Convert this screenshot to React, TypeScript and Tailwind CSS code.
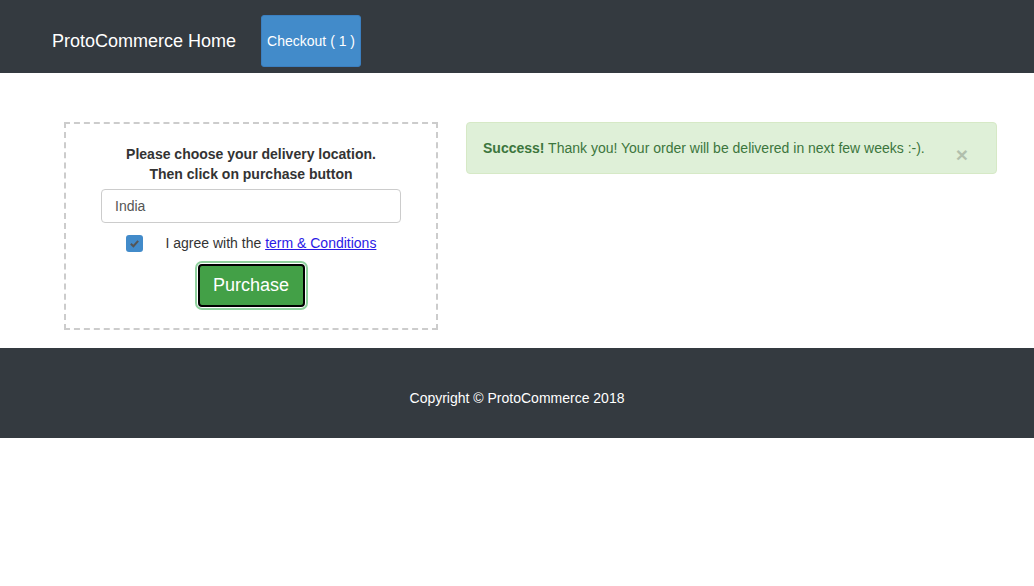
import React from 'react';

const Header = () => (
  <nav className="h-[73px] bg-[#343a40] flex items-start pl-[52px]">
    <span className="mt-[30px] text-[18px] leading-[22px] text-white">ProtoCommerce Home</span>
    <button className="ml-[25px] mt-[15px] h-[52px] w-[100px] rounded-[3px] border border-[#3b7fc0] bg-[#428bca] text-[14px] text-white">
      Checkout ( 1 )
    </button>
  </nav>
);

const DeliveryBox = () => (
  <div className="w-[374px] h-[208px] border-2 border-dashed border-[#cccccc] pt-[20px] flex flex-col items-center">
    <p className="text-[14px] leading-[20px] font-bold text-[#333] text-center">
      Please choose your delivery location.
      <br />
      Then click on purchase button
    </p>
    <input
      readOnly
      value="India"
      className="mt-[5px] w-[300px] h-[34px] rounded-[4px] border border-[#cccccc] px-[13px] text-[14px] text-[#555] outline-none"
    />
    <div className="mt-[10px] h-[20px] flex items-center w-[251px] text-[14px] text-[#333]">
      <span className="w-[17px] h-[17px] rounded-[3px] bg-[#428bca] flex items-center justify-center">
        <svg width="11" height="11" viewBox="0 0 12 12">
          <path d="M2 6.3 L4.8 9 L10 3.2" stroke="#555" strokeWidth="2.2" fill="none" />
        </svg>
      </span>
      <span className="ml-[23px]">
        I agree with the{' '}
        <a href="#" className="text-[#2a1ae6] underline">
          term &amp; Conditions
        </a>
      </span>
    </div>
    <div className="mt-[8px] rounded-[7px] bg-[#8fd19e] p-[2px]">
      <div className="rounded-[5px] bg-white p-[1px]">
        <button className="block w-[107px] h-[43px] rounded-[4px] border-2 border-black bg-[#43a047] text-[18px] text-white">
          Purchase
        </button>
      </div>
    </div>
  </div>
);

const SuccessAlert = () => (
  <div className="w-[531px] h-[52px] rounded-[4px] border border-[#d6e9c6] bg-[#dff0d8] pl-[16px] pr-[28px] flex items-center justify-between text-[14px] text-[#3c763d]">
    <span>
      <strong>Success!</strong> Thank you! Your order will be delivered in next few weeks :-).
    </span>
    <span className="mt-[12px] text-[21px] leading-none font-bold text-black opacity-20">×</span>
  </div>
);

export default function App() {
  return (
    <div className="w-[1034px] font-['Liberation_Sans',Arial,sans-serif]">
      <Header />
      <main className="h-[275px] pt-[49px] pl-[64px] flex gap-[28px]">
        <DeliveryBox />
        <SuccessAlert />
      </main>
      <footer className="h-[90px] bg-[#343a40] pt-[10px] flex items-center justify-center">
        <span className="text-[14px] text-white">Copyright © ProtoCommerce 2018</span>
      </footer>
    </div>
  );
}
